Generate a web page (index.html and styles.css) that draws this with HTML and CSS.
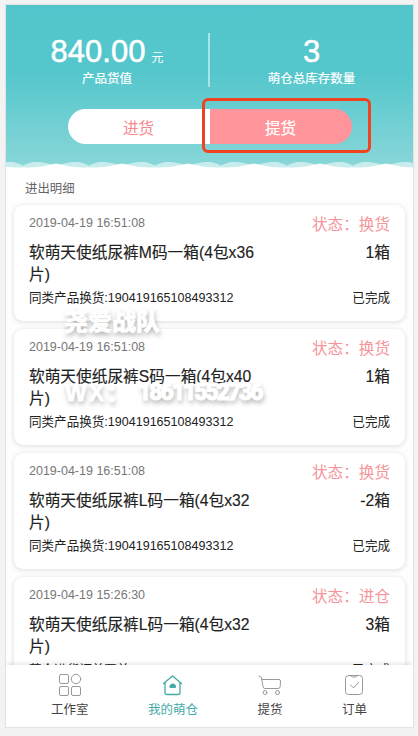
FILE: index.html
```html
<!DOCTYPE html>
<html lang="zh-CN">
<head>
<meta charset="utf-8">
<title>我的萌仓</title>
<link rel="stylesheet" href="styles.css">
</head>
<body>
<main class="app">
  <header class="hero">
    <div class="stats">
      <div class="stat stat-value"><div class="num">840.00<small>元</small></div><div class="cap">产品货值</div></div>
      <div class="stat"><div class="num">3</div><div class="cap">萌仓总库存数量</div></div>
    </div>
    <div class="switch">
      <div class="half in">进货</div>
      <div class="half out">提货<span class="focus"></span></div>
    </div>
    <svg class="wave" width="407" height="8" viewBox="0 0 407 8">
      <defs>
        <pattern id="w" x="-16" width="66" height="8" patternUnits="userSpaceOnUse">
          <path d="M0 3.500C10 3 12 1 20 1C26 1 29 3 33 4.500C37 3 40 1 46 1C54 1 56 3 66 3.500V8H0Z" fill="#fff" opacity=".55"/>
          <path d="M0 2.500C11 5 17 6.500 33 6.500C49 6.500 55 5 66 2.500V8H0Z" fill="#fff"/>
        </pattern>
      </defs>
      <rect width="407" height="8" fill="url(#w)"/>
    </svg>
  </header>
  <section class="list">
    <h2>进出明细</h2>
    <article class="card">
      <div class="row top"><time>2019-04-19 16:51:08</time><span class="state">状态：换货</span></div>
      <div class="row name"><p>软萌天使纸尿裤M码一箱(4包x36<br>片)</p><span>1箱</span></div>
      <div class="row foot"><span>同类产品换货:190419165108493312</span><span>已完成</span></div>
    </article>
    <article class="card">
      <div class="row top"><time>2019-04-19 16:51:08</time><span class="state">状态：换货</span></div>
      <div class="row name"><p>软萌天使纸尿裤S码一箱(4包x40<br>片)</p><span>1箱</span></div>
      <div class="row foot"><span>同类产品换货:190419165108493312</span><span>已完成</span></div>
    </article>
    <article class="card">
      <div class="row top"><time>2019-04-19 16:51:08</time><span class="state">状态：换货</span></div>
      <div class="row name"><p>软萌天使纸尿裤L码一箱(4包x32<br>片)</p><span>-2箱</span></div>
      <div class="row foot"><span>同类产品换货:190419165108493312</span><span>已完成</span></div>
    </article>
    <article class="card">
      <div class="row top"><time>2019-04-19 15:26:30</time><span class="state">状态：进仓</span></div>
      <div class="row name"><p>软萌天使纸尿裤L码一箱(4包x32<br>片)</p><span>3箱</span></div>
      <div class="row foot"><span>萌仓进货订单要单</span><span>已完成</span></div>
    </article>
  </section>
  <nav class="tabs">
    <div class="tab"><svg width="24" height="24" viewBox="0 0 24 24"><rect x="1.500" y="1.500" width="9" height="9" rx="1.500"/><circle cx="18" cy="6" r="4.700"/><rect x="1.500" y="13.500" width="9" height="9" rx="1.500"/><rect x="13.500" y="13.500" width="9" height="9" rx="1.500"/></svg>工作室</div>
    <div class="tab active"><svg width="24" height="24" viewBox="0 0 24 24"><path d="M2.500 10.500L11.500 3L20.500 10.500M4 9.500V19.500Q4 21.500 6 21.500H17Q19 21.500 19 19.500V9.500"/><path class="solid" d="M9.500 15a1.700 1.700 0 0 1 0-3.200a2.600 2.600 0 0 1 4.500 0a1.700 1.700 0 0 1 0 3.200z"/></svg>我的萌仓</div>
    <div class="tab"><svg width="24" height="24" viewBox="0 0 24 24"><path d="M1 3Q3 3 3.500 5L5 13.500Q5.300 15.500 7 15.500H20Q22 15.500 22.200 13.500L22.500 8Q22.500 6.500 21 6.500H4"/><circle cx="7" cy="19.500" r="2"/><circle cx="19.500" cy="19.500" r="2"/></svg>提货</div>
    <div class="tab"><svg width="24" height="24" viewBox="0 0 24 24"><rect x="3.500" y="2.500" width="17" height="19" rx="3"/><path d="M9 2.500Q9 4 10.500 4H13.500Q15 4 15 2.500M8.500 12L11.500 15L16.500 9.500"/></svg>订单</div>
  </nav>
  <div class="mark mark-team">尧爱战队</div>
  <div class="mark mark-wx"><span>WX：</span><b>18611552736</b></div>
</main>
</body>
</html>
```
FILE: styles.css
```css
* { box-sizing: border-box; margin: 0; padding: 0; }
body { background: #f3f3f4; padding: 5px 5px 9px 6px; height: 736px; overflow: hidden; font-family: "Liberation Sans", "Noto Sans CJK SC", sans-serif; }
.app { position: relative; width: 407px; height: 722px; background: #fefefe; overflow: hidden; display: flex; flex-direction: column; box-shadow: 0 0 1px 1px #e4e4e4; }
.hero { flex: none; height: 164px; padding-top: 28px; display: flex; flex-direction: column; align-items: center; background: linear-gradient(#52c6cc 0%, #55c7cc 42%, #8ad7d9 100%); color: #fff; }
.stats { display: flex; width: 100%; height: 54px; }
.stat { flex: 1; text-align: center; }
.stat-value { flex: 0 0 204px; border-right: 2px solid #a9e3e5; }
.num { height: 37px; font-size: 31px; line-height: 37px; -webkit-text-stroke: .5px #fff; }
.num small { font-size: 12px; line-height: 1; margin-left: 6px; -webkit-text-stroke: 0; }
.cap { font-size: 12.5px; line-height: 18px; -webkit-text-stroke: .2px #fff; }
.switch { display: flex; width: 284px; height: 35px; margin-top: 22px; }
.half { flex: 1; display: flex; align-items: center; justify-content: center; font-size: 15.600px; }
.in { background: #fff; color: #f5898e; border-radius: 18px 0 0 18px; }
.out { position: relative; background: #ff959a; border-radius: 0 18px 18px 0; -webkit-text-stroke: .2px #fff; }
.focus { position: absolute; left: -8px; top: -11px; width: 169px; height: 55px; border: 3px solid #f0421f; border-radius: 6px; }
.wave { display: block; margin-top: auto; }
.list { flex: 1; min-height: 0; overflow: hidden; padding: 0 8px; }
.list h2 { font-size: 12.400px; font-weight: 400; line-height: 18px; color: #666; padding: 11px 11px 7px; height: 36px; }
.card { height: 116px; margin-bottom: 8px; padding: 9px 15px; background: #fff; border-radius: 9px; box-shadow: 0 1px 4px 1px rgba(0,0,0,.1); color: #222; }
.row { display: flex; justify-content: space-between; }
.top { height: 28px; font-size: 12.500px; line-height: 18px; color: #777; }
.state { font-size: 15.600px; line-height: 21px; color: #f5959a; }
.name { font-size: 15.700px; line-height: 22px; height: 47px; -webkit-text-stroke: .15px #222; }
.foot { font-size: 12.550px; line-height: 18px; }
.tabs { position: relative; flex: none; height: 62px; display: flex; justify-content: space-between; padding: 8px 46px 0 45px; background: #fff; box-shadow: 0 -1px 5px rgba(0,0,0,.12); }
.tab { display: flex; flex-direction: column; align-items: center; font-size: 12.500px; line-height: 18px; gap: 4px; color: #444; }
.tab svg { fill: none; stroke: #999; stroke-width: 1; stroke-linejoin: round; stroke-linecap: round; }
.active { color: #42aaa7; }
.active svg { stroke: #42aaa7; stroke-width: 1.300; }
.active .solid { fill: #42aaa7; stroke: none; }
.mark { position: absolute; color: #fff; font-weight: 900; white-space: nowrap; text-shadow: 1px 3px 5px rgba(0,0,0,.32); }
.mark-team { left: 58px; top: 301px; font-size: 24px; line-height: 32px; -webkit-text-stroke: .6px #fff; }
.mark-wx { left: 59px; top: 374px; display: flex; font-size: 23px; line-height: 28px; -webkit-text-stroke: .8px #fff; }
.mark-wx span { width: 73px; letter-spacing: 2px; }
.mark-wx b { font-family: Roboto, sans-serif; font-weight: 900; letter-spacing: -2.100px; }
```
